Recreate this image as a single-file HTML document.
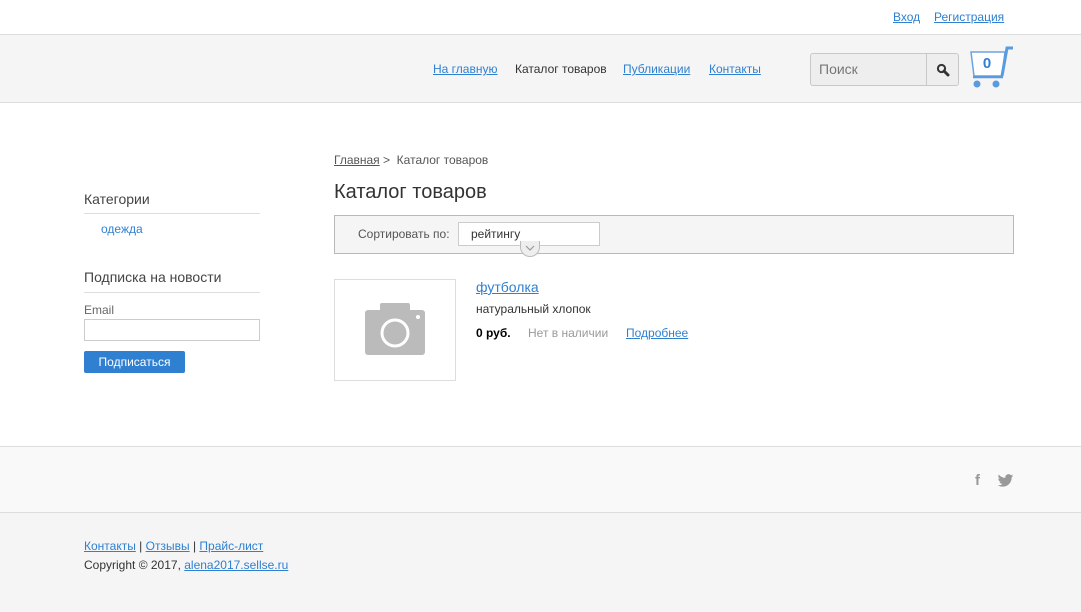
<!DOCTYPE html>
<html><head><meta charset="utf-8"><style>
*{margin:0;padding:0;box-sizing:border-box}
body{width:1081px;height:612px;overflow:hidden;background:#fff;font-family:"Liberation Sans",Arial,sans-serif;font-size:12px;color:#333;position:relative}
a{color:#2f80d1;text-decoration:underline}
.abs{position:absolute}
</style></head><body>
<a class="abs" style="left:893px;top:10px;font-size:12px">Вход</a>
<a class="abs" style="left:934px;top:10px;font-size:12px">Регистрация</a>
<div class="abs" style="left:0;top:34px;width:1081px;height:69px;background:#f5f5f5;border-top:1px solid #ddd;border-bottom:1px solid #ddd"></div>
<a class="abs" style="left:433px;top:62px">На главную</a>
<span class="abs" style="left:515px;top:62px;color:#333">Каталог товаров</span>
<a class="abs" style="left:623px;top:62px">Публикации</a>
<a class="abs" style="left:709px;top:62px">Контакты</a>
<div class="abs" style="left:810px;top:53px;width:149px;height:33px;border:1px solid #c8c8c8;border-radius:3px;background:#eee"></div>
<span class="abs" style="left:819px;top:61px;font-size:14px;color:#777">Поиск</span>
<div class="abs" style="left:926px;top:54px;width:1px;height:31px;background:#c8c8c8"></div>
<svg class="abs" style="left:936px;top:63px" width="14" height="14" viewBox="0 0 14 14"><circle cx="5.5" cy="5.5" r="3.6" fill="none" stroke="#333" stroke-width="2"/><path d="M8 8l4 4" stroke="#333" stroke-width="3" stroke-linecap="round"/></svg>
<svg class="abs" style="left:968px;top:45px" width="48" height="46" viewBox="0 0 48 46"><path d="M3 7h34l-3 24H6z" fill="#fff" stroke="#6aa3e4" stroke-width="1.5"/><path d="M34 31l5-28h6" fill="none" stroke="#5a9be0" stroke-width="3"/><path d="M5 32h30" stroke="#5a9be0" stroke-width="2.5"/><circle cx="9" cy="39" r="3.5" fill="#5a9be0"/><circle cx="28" cy="39" r="3.5" fill="#5a9be0"/><text x="19" y="23" text-anchor="middle" font-family="Liberation Sans" font-weight="bold" font-size="15" fill="#2f80d1">0</text></svg>

<a class="abs" style="left:334px;top:153px;color:#555">Главная</a>
<span class="abs" style="left:383px;top:153px;color:#555">&gt;&nbsp; Каталог товаров</span>
<div class="abs" style="left:334px;top:181px;font-size:20px;color:#333">Каталог товаров</div>
<div class="abs" style="left:334px;top:215px;width:680px;height:39px;background:#f5f5f5;border:1px solid #b9b9b9"></div>
<span class="abs" style="left:358px;top:227px;color:#555">Сортировать по:</span>
<div class="abs" style="left:458px;top:222px;width:142px;height:24px;background:#fff;border:1px solid #ccc"></div>
<span class="abs" style="left:471px;top:227px;color:#333">рейтингу</span>
<div class="abs" style="left:520px;top:241px;width:20px;height:16px;border-radius:0 0 10px 10px;background:#eee;border:1px solid #bbb;border-top:none"></div>
<svg class="abs" style="left:525px;top:245px" width="10" height="6"><path d="M1 1l4 4 4-4" fill="none" stroke="#999" stroke-width="1.2"/></svg>

<div class="abs" style="left:334px;top:279px;width:122px;height:102px;border:1px solid #ddd"></div>
<svg class="abs" style="left:365px;top:303px" width="60" height="52" viewBox="0 0 60 52"><rect x="15" y="0" width="30" height="10" rx="2" fill="#bbb"/><rect x="0" y="7" width="60" height="45" rx="3" fill="#bbb"/><circle cx="30" cy="30" r="13" fill="none" stroke="#fff" stroke-width="3"/><circle cx="53" cy="14" r="2" fill="#fff"/></svg>
<a class="abs" style="left:476px;top:279px;font-size:14px">футболка</a>
<span class="abs" style="left:476px;top:302px;color:#333">натуральный хлопок</span>
<b class="abs" style="left:476px;top:326px;color:#000">0 руб.</b>
<span class="abs" style="left:528px;top:326px;color:#999">Нет в наличии</span>
<a class="abs" style="left:626px;top:326px">Подробнее</a>

<div class="abs" style="left:84px;top:191px;font-size:14px;color:#444">Категории</div>
<div class="abs" style="left:84px;top:213px;width:176px;height:1px;background:#ddd"></div>
<span class="abs" style="left:101px;top:222px;color:#2f80d1">одежда</span>
<div class="abs" style="left:84px;top:269px;font-size:14px;color:#444">Подписка на новости</div>
<div class="abs" style="left:84px;top:292px;width:176px;height:1px;background:#ddd"></div>
<span class="abs" style="left:84px;top:303px;color:#666">Email</span>
<div class="abs" style="left:84px;top:319px;width:176px;height:22px;border:1px solid #ccc;background:#fff"></div>
<div class="abs" style="left:84px;top:351px;width:101px;height:22px;background:#2f80d1;border-radius:2px;color:#fff;text-align:center;line-height:22px">Подписаться</div>

<div class="abs" style="left:0;top:446px;width:1081px;height:67px;background:#f9f9f9;border-top:1px solid #ddd;border-bottom:1px solid #ddd"></div>
<span class="abs" style="left:975px;top:472px;font-size:15px;font-weight:bold;color:#999">f</span>
<svg class="abs" style="left:997px;top:474px" width="17" height="13" viewBox="0 0 24 20"><path d="M24 2.5a10 10 0 0 1-2.8.8A5 5 0 0 0 23.3.6a10 10 0 0 1-3.1 1.2A4.9 4.9 0 0 0 11.8 6 14 14 0 0 1 1.7.9a4.9 4.9 0 0 0 1.5 6.6 5 5 0 0 1-2.2-.6 4.9 4.9 0 0 0 4 4.9 5 5 0 0 1-2.2.1 4.9 4.9 0 0 0 4.6 3.4A9.9 9.9 0 0 1 0 17.3 14 14 0 0 0 7.5 19.5c9 0 14-7.5 14-14v-.6A10 10 0 0 0 24 2.5z" fill="#999"/></svg>
<div class="abs" style="left:0;top:513px;width:1081px;height:99px;background:#f5f5f5"></div>
<div class="abs" style="left:84px;top:539px;color:#333"><a>Контакты</a> | <a>Отзывы</a> | <a>Прайс-лист</a></div>
<div class="abs" style="left:84px;top:558px;color:#333">Copyright © 2017, <a>alena2017.sellse.ru</a></div>
</body></html>
